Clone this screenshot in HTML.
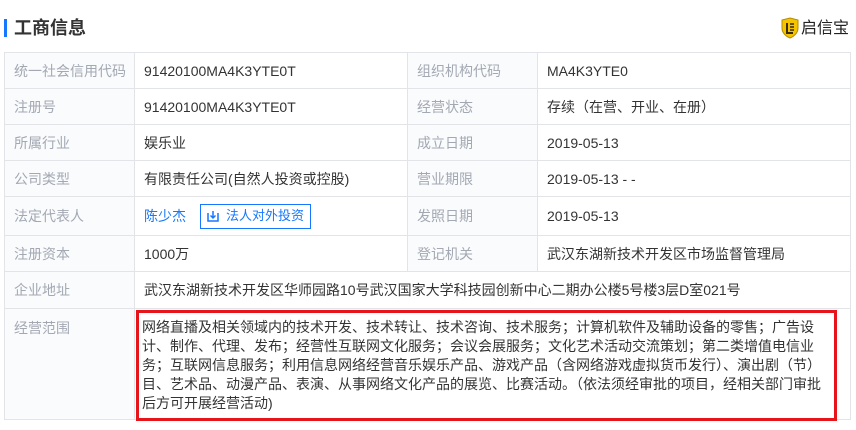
<!DOCTYPE html>
<html><head><meta charset="utf-8"><style>
*{margin:0;padding:0;box-sizing:border-box}
body{width:856px;height:430px;background:#fff;font-family:"Liberation Sans","Noto Sans CJK SC",sans-serif;position:relative;overflow:hidden;color:#333}
.bar{position:absolute;left:4px;top:19px;width:3px;height:18px;background:#1677ff}
.title{position:absolute;left:14px;top:15px;font-size:18px;font-weight:bold;color:#333;line-height:26px}
.logo{position:absolute;left:781px;top:17px}
.logot{position:absolute;left:801px;top:17px;font-size:16px;color:#222;line-height:24px}
.c{position:absolute;border-left:1px solid #e2e4e8;border-top:1px solid #e2e4e8;font-size:14px;line-height:20px;padding-left:9px;display:flex;align-items:center}
.l{background:#fafbfc;color:#a3a8b3}
.v{color:#333}
.a{color:#1677ff}
.btn{display:inline-flex;align-items:center;border:1px solid #1677ff;color:#1677ff;height:25px;padding:0 6px 0 5px;margin-left:14px;font-size:13px}
.scope{position:absolute;left:136px;top:310px;width:701px;height:111px;border:3px solid #e8141c;padding:5px 0 0 3px;font-size:14px;line-height:19px;color:#333;white-space:nowrap}
</style></head><body>
<div class="bar"></div><div class="title">工商信息</div>
<svg class="logo" width="18" height="22" viewBox="0 0 18 22"><path d="M9 1 L17 3 V11 C17 16 13 19.5 9 21 C5 19.5 1 16 1 11 V3 Z" fill="#f5c400" stroke="#b58a00" stroke-width="1"/><path d="M6 6 V16 H12" fill="none" stroke="#3a2c00" stroke-width="2"/><path d="M9 7h4M9 10h4M9 13h4" stroke="#3a2c00" stroke-width="1.4"/></svg>
<div class="logot">启信宝</div>
<!-- rows -->
<div class="c l" style="left:4px;top:52px;width:130px;height:36px">统一社会信用代码</div>
<div class="c v" style="left:134px;top:52px;width:273px;height:36px">91420100MA4K3YTE0T</div>
<div class="c l" style="left:407px;top:52px;width:130px;height:36px">组织机构代码</div>
<div class="c v" style="left:537px;top:52px;width:314px;height:36px;border-right:1px solid #e2e4e8">MA4K3YTE0</div>

<div class="c l" style="left:4px;top:88px;width:130px;height:36px">注册号</div>
<div class="c v" style="left:134px;top:88px;width:273px;height:36px">91420100MA4K3YTE0T</div>
<div class="c l" style="left:407px;top:88px;width:130px;height:36px">经营状态</div>
<div class="c v" style="left:537px;top:88px;width:314px;height:36px;border-right:1px solid #e2e4e8">存续（在营、开业、在册）</div>

<div class="c l" style="left:4px;top:124px;width:130px;height:36px">所属行业</div>
<div class="c v" style="left:134px;top:124px;width:273px;height:36px">娱乐业</div>
<div class="c l" style="left:407px;top:124px;width:130px;height:36px">成立日期</div>
<div class="c v" style="left:537px;top:124px;width:314px;height:36px;border-right:1px solid #e2e4e8">2019-05-13</div>

<div class="c l" style="left:4px;top:160px;width:130px;height:36px">公司类型</div>
<div class="c v" style="left:134px;top:160px;width:273px;height:36px">有限责任公司(自然人投资或控股)</div>
<div class="c l" style="left:407px;top:160px;width:130px;height:36px">营业期限</div>
<div class="c v" style="left:537px;top:160px;width:314px;height:36px;border-right:1px solid #e2e4e8">2019-05-13 - -</div>

<div class="c l" style="left:4px;top:196px;width:130px;height:39px">法定代表人</div>
<div class="c v" style="left:134px;top:196px;width:273px;height:39px"><span class="a">陈少杰</span><span class="btn"><svg width="14" height="14" viewBox="0 0 14 14" style="margin-right:6px"><path d="M2 4v8h10V4" fill="none" stroke="#1677ff" stroke-width="1.5"/><path d="M7 2v7M4.5 6.5 7 9l2.5-2.5" fill="none" stroke="#1677ff" stroke-width="1.5"/></svg>法人对外投资</span></div>
<div class="c l" style="left:407px;top:196px;width:130px;height:39px">发照日期</div>
<div class="c v" style="left:537px;top:196px;width:314px;height:39px;border-right:1px solid #e2e4e8">2019-05-13</div>

<div class="c l" style="left:4px;top:235px;width:130px;height:36px">注册资本</div>
<div class="c v" style="left:134px;top:235px;width:273px;height:36px">1000万</div>
<div class="c l" style="left:407px;top:235px;width:130px;height:36px">登记机关</div>
<div class="c v" style="left:537px;top:235px;width:314px;height:36px;border-right:1px solid #e2e4e8">武汉东湖新技术开发区市场监督管理局</div>

<div class="c l" style="left:4px;top:271px;width:130px;height:37px">企业地址</div>
<div class="c v" style="left:134px;top:271px;width:717px;height:37px;border-right:1px solid #e2e4e8">武汉东湖新技术开发区华师园路10号武汉国家大学科技园创新中心二期办公楼5号楼3层D室021号</div>

<div class="c l" style="left:4px;top:308px;width:130px;height:112px;align-items:flex-start;padding-top:9px;border-bottom:1px solid #e2e4e8">经营范围</div>
<div class="c v" style="left:134px;top:308px;width:717px;height:112px;border-right:1px solid #e2e4e8;border-bottom:1px solid #e2e4e8"></div>
<div class="scope">网络直播及相关领域内的技术开发、技术转让、技术咨询、技术服务；计算机软件及辅助设备的零售；广告设<br>计、制作、代理、发布；经营性互联网文化服务；会议会展服务；文化艺术活动交流策划；第二类增值电信业<br>务；互联网信息服务；利用信息网络经营音乐娱乐产品、游戏产品（含网络游戏虚拟货币发行）、演出剧（节）<br>目、艺术品、动漫产品、表演、从事网络文化产品的展览、比赛活动。（依法须经审批的项目，经相关部门审批<br>后方可开展经营活动)</div>
</body></html>
